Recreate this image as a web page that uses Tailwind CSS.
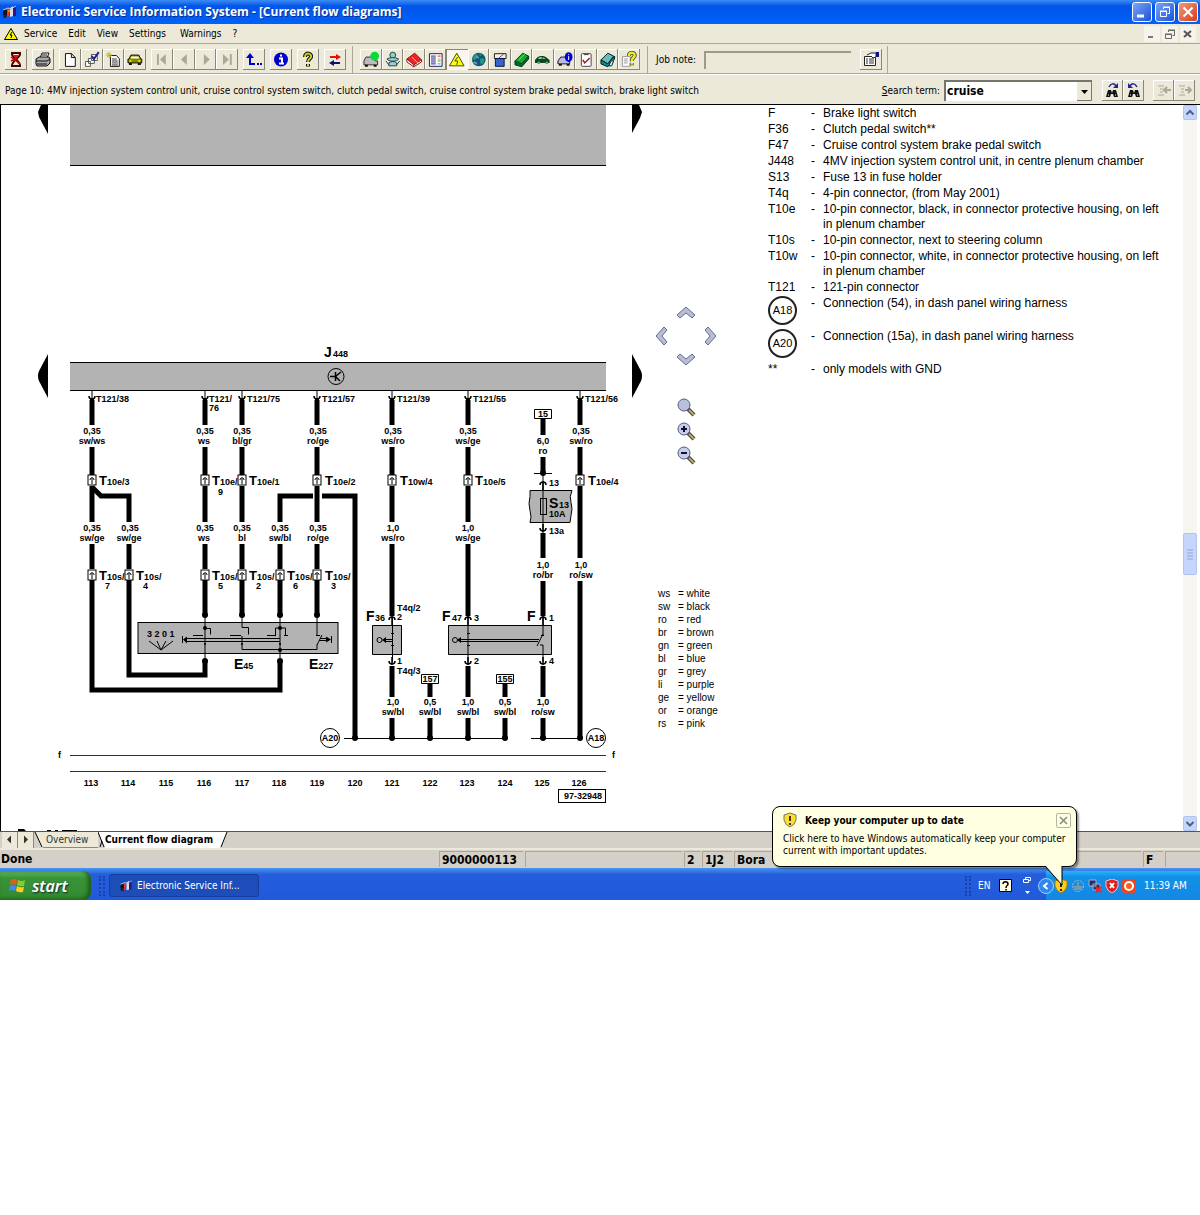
<!DOCTYPE html>
<html lang="en">
<head>
  <meta charset="UTF-8" />
  <meta name="viewport" content="width=device-width, initial-scale=1.0" />
  <title>Electronic Service Information System - [Current flow diagrams]</title>
  <script src="https://cdn.jsdelivr.net/npm/@tailwindcss/browser@4"></script>
</head>
<body class="bg-white text-black font-['DejaVu_Sans_Condensed','Noto_Sans',sans-serif] text-[10px]">

  <!-- title bar -->
  <header class="h-6 flex items-center gap-[3px] pl-0.5 pr-0.5 bg-linear-to-b from-[#3b8cf5] via-[#0254e6] via-25% to-[#0062fa]">
    <svg class="w-4 h-3.5" viewBox="0 0 16 14"><path d="M1 5h4v5H1z" fill="#111"/><circle cx="3" cy="11" r="2" fill="#222"/><path d="M5 4l2-2v9l-2 1z" fill="#e33"/><path d="M8 3l3-2v10l-3 1z" fill="#ddd"/><path d="M11 2h3v9h-3z" fill="#318"/><path d="M1 5l5-2 3 1 5-3" stroke="#9cf" fill="none"/><path d="M6 6h4" stroke="#fd3"/></svg>
    <h1 class="flex-1 font-['Open_Sans',sans-serif] font-bold text-white text-[12px] whitespace-nowrap [text-shadow:1px_1px_#0a2c8c]">Electronic Service Information System - [Current flow diagrams]</h1>
    <div class="flex gap-[3px] [&>button]:size-5 [&>button]:rounded-[3px] [&>button]:border [&>button]:border-white [&_svg]:size-full">
      <button aria-label="Minimize" class="bg-linear-to-br from-[#7ba4f4] to-[#1d4fd8]"><svg viewBox="0 0 18 18"><path d="M4 13h7" stroke="#fff" stroke-width="3"/></svg></button>
      <button aria-label="Restore" class="bg-linear-to-br from-[#7ba4f4] to-[#1d4fd8]"><svg viewBox="0 0 18 18" fill="none" stroke="#fff"><path d="M4.500 8.500h6v5h-6zM4 8h7M7.500 6v-1.500h6v6h-2M7 4h7"/></svg></button>
      <button aria-label="Close" class="bg-linear-to-br from-[#f0977c] to-[#d43a12]"><svg viewBox="0 0 18 18"><path d="M4.500 4.500l9 9M13.500 4.500l-9 9" stroke="#fff" stroke-width="2"/></svg></button>
    </div>
  </header>

  <!-- menu -->
  <nav class="h-[19px] flex items-center bg-[#ece9d8] pl-1 pr-1">
    <svg class="w-3.5 h-3 mr-[6px]" viewBox="0 0 14 12"><path d="M7 .5L13.500 11.500H.5z" fill="#ff0" stroke="#000"/><path d="M8 4l-2 3h2l-1 3" stroke="#000" fill="none"/></svg>
    <div class="flex-1 flex gap-[11px]">
      <a href="#">Service</a><a href="#">Edit</a><a href="#">View</a><a href="#">Settings</a><a href="#" class="ml-[3px]">Warnings</a><a href="#">?</a>
    </div>
    <div class="flex gap-[2px] [&>button]:size-4 [&>button]:bg-[#f5f3ea] [&_svg]:size-full" >
      <button aria-label="Minimize document"><svg viewBox="0 0 16 16"><path d="M4 11h5" stroke="#777" stroke-width="2"/></svg></button>
      <button aria-label="Restore document"><svg viewBox="0 0 16 16" fill="none" stroke="#666"><path d="M3.500 8.500h6v4h-6zM3 8h7M6.500 6V4.500h6v5h-2M6 4h7"/></svg></button>
      <button aria-label="Close document"><svg viewBox="0 0 16 16"><path d="M4 5l7 6M11 5l-7 6" stroke="#555" stroke-width="2"/></svg></button>
    </div>
  </nav>

  <!-- toolbar -->
  <div class="h-[31px] flex items-center bg-[#ece9d8] border-y border-t-[#aca899] border-b-[#aca899] pl-[5px] pt-[2px] [&_button]:h-[21px] [&_button]:w-[22px] [&_button]:shadow-[inset_-1px_-1px_#8a8778,inset_1px_1px_#fff] [&_button]:p-[2px] [&_svg]:size-full">
    <div class="flex gap-[5px]">
      <button aria-label="Exit"><svg viewBox="0 0 18 17"><path d="M4 2h10M4 15h10M5 3c0 4 8 6 8 12M13 3c0 4-8 6-8 12" stroke="#400" stroke-width="2" fill="none"/><path d="M6 4h6l-3 4z" fill="#e11"/><path d="M6 14l3-4 3 4z" fill="#ece9d8"/><path d="M4 6l9 7M4 10l6-3" stroke="#c00" stroke-width="1.500"/></svg></button>
      <button aria-label="Print"><svg viewBox="0 0 18 17" stroke="#111"><path d="M6 7l2-5h7l-2 5z" fill="#fff"/><path d="M2 8l3-2h10l1 2v4l-3 3H3l-1-2z" fill="#aaa"/><path d="M2 10h11l3-2M3 13h10M8 4h5" fill="none"/></svg></button>
      <div class="flex w-[87px] [&>button]:flex-1">
        <button aria-label="New"><svg viewBox="0 0 18 17"><path d="M4.500 2.500h6l4 4v9h-10zM10.500 2.500v4h4" fill="#fff" stroke="#111"/></svg></button>
        <button aria-label="Select jobs"><svg viewBox="0 0 18 17"><path d="M8.500 3.500h6v6h-6zM5.500 7.500h6v5h-6zM2.500 10.500h5v5h-5z" fill="#fff" stroke="#555"/><path d="M9 5l2 3 5-7" stroke="#228" stroke-width="2" fill="none"/></svg></button>
        <button aria-label="New document"><svg viewBox="0 0 18 17"><path d="M5.500 4.500h6l3 3v8h-9z" fill="#fff" stroke="#111"/><path d="M7 8h5M7 10h6M7 12h6M7 14h6" stroke="#333"/><path d="M1 4h6M4 1v6M2 2l4 4M6 2L2 6" stroke="#bb2"/></svg></button>
        <button aria-label="Vehicle"><svg viewBox="0 0 18 17"><path d="M5 4h8l2 4h1v4H2V8h1z" fill="#880" stroke="#111"/><path d="M5.500 5.500h7l1 2h-9z" fill="#ffd"/><circle cx="4.500" cy="10" r="1" fill="#ff0"/><circle cx="13.500" cy="10" r="1" fill="#ff0"/><path d="M3 13h3M12 13h3" stroke="#111" stroke-width="2"/></svg></button>
      </div>
      <div class="flex w-[87px] [&>button]:flex-1 text-[#aca899]">
        <button aria-label="First page"><svg viewBox="0 0 18 17"><path d="M5 3v11" stroke="currentColor" stroke-width="2"/><path d="M13 3v11L7 8.500z" fill="currentColor"/></svg></button>
        <button aria-label="Previous page"><svg viewBox="0 0 18 17"><path d="M12 3v11L6 8.500z" fill="currentColor"/></svg></button>
        <button aria-label="Next page"><svg viewBox="0 0 18 17"><path d="M7 3v11l6-5.500z" fill="currentColor"/></svg></button>
        <button aria-label="Last page"><svg viewBox="0 0 18 17"><path d="M13 3v11" stroke="currentColor" stroke-width="2"/><path d="M5 3v11l6-5.500z" fill="currentColor"/></svg></button>
      </div>
      <button aria-label="Back"><svg viewBox="0 0 18 17"><path d="M5 5v8h5" stroke="#00c" stroke-width="2" fill="none"/><path d="M1 7l4-5 4 5z" fill="#00c"/><path d="M12 12h2v2h-2zM15 12h2v2h-2z" fill="#00c"/></svg></button>
      <button aria-label="Information"><svg viewBox="0 0 18 17"><circle cx="9" cy="8.500" r="7" fill="#00c"/><path d="M7 7.500h3v5M7 12.500h5M8 4.500h2" stroke="#fff" stroke-width="2" fill="none"/></svg></button>
      <button aria-label="Help"><svg viewBox="0 0 18 17"><path d="M6 6c0-5 7-4 6 0-1 2-3 2-3 5M9 13v2.500" stroke="#111" stroke-width="4" fill="none"/><path d="M6 6c0-5 7-4 6 0-1 2-3 2-3 5M9 13v2" stroke="#cc2" stroke-width="2" fill="none"/></svg></button>
      <button aria-label="Swap"><svg viewBox="0 0 18 17"><path d="M4 5h6v-2l5 3-5 3V7H4z" fill="#d11"/><path d="M14 11H8V9l-5 3 5 3v-2h6z" fill="#116"/></svg></button>
    </div>
    <div class="w-px h-[28px] bg-[#aca899] ml-[6px] mr-[7px]"></div>
    <div class="flex w-[280px] [&>button]:flex-1">
      <button aria-label="Vehicle OK"><svg viewBox="0 0 18 17"><path d="M4 6h8l2 4h2v4H2v-4z" fill="#bbb" stroke="#333"/><path d="M3 15h3M12 15h3" stroke="#111" stroke-width="2"/><circle cx="13" cy="5" r="4.500" fill="#0d3"/></svg></button>
      <button aria-label="Technician"><svg viewBox="0 0 18 17" fill="#9cc" stroke="#244"><circle cx="9" cy="4" r="3"/><path d="M3 8c4-2 8-2 12 0-2 3-10 3-12 0zM5 12c2-2 6-2 8 0v3H5zM2 10l3 4M16 10l-3 4"/></svg></button>
      <button aria-label="Manuals"><svg viewBox="0 0 18 17"><path d="M2 8l8-6 7 7-8 5z" fill="#e22" stroke="#811"/><path d="M2 8v3l7 5v-2zM9 16l8-5V9" fill="#fff" stroke="#811"/><path d="M7 6l6 6" stroke="#fbb"/></svg></button>
      <button aria-label="Contents"><svg viewBox="0 0 18 17"><path d="M2.500 2.500h13v13h-13z" fill="#fff" stroke="#225"/><path d="M4 5h5M4 7h5M4 9h5M4 11h5M4 13h5" stroke="#228"/><path d="M11 5h3" stroke="#d22"/><path d="M11 8h3" stroke="#da2"/><path d="M11 10h3" stroke="#2a2"/><path d="M11 13h3" stroke="#29d"/></svg></button>
      <button aria-label="Current flow diagrams" aria-pressed="true" class="bg-[#f8f6ee] shadow-[inset_1px_1px_#8a8778]!"><svg viewBox="0 0 18 17"><path d="M9 2l7.500 13H1.500z" fill="#ff0" stroke="#442"/><path d="M10 6l-3 4h3l-1 4" stroke="#443" fill="none"/></svg></button>
      <button aria-label="World"><svg viewBox="0 0 18 17"><circle cx="9" cy="8.500" r="7" fill="#157" /><path d="M4 4c4-2 5 0 3 3s-4 2-5 1zM10 8c4-2 6 0 4 4l-3 2zM9 2l4 2-3 1z" fill="#297"/><path d="M4 11l3 2M6 5l3 2" stroke="#69c" stroke-width="2"/></svg></button>
      <button aria-label="Screen"><svg viewBox="0 0 18 17"><path d="M3.500 2.500h12v5h-12z" fill="#eee" stroke="#222"/><path d="M4.500 7.500h9v8h-9z" fill="#36c" stroke="#113"/><path d="M8 7l5-4" stroke="#555"/></svg></button>
      <button aria-label="Green book"><svg viewBox="0 0 18 17"><path d="M2 10l8-8 6 3-7 8z" fill="#1a3" stroke="#041"/><path d="M2 10v4l7 2 7-8V5l-7 8z" fill="#063" stroke="#041"/><path d="M6 9l6-6" stroke="#6e6"/></svg></button>
      <button aria-label="Body work"><svg viewBox="0 0 18 17"><path d="M1 9c2-2 3-4 7-4s5 2 8 4v3H1z" fill="#142"/><path d="M4 8l2-2h2v2zM9 6l3 2H9z" fill="#8c9"/><circle cx="5" cy="12" r="1.500" fill="#5a7"/><circle cx="13" cy="12" r="1.500" fill="#5a7"/></svg></button>
      <button aria-label="Vehicle information"><svg viewBox="0 0 18 17"><path d="M2 10l3-4h6l3 4v3H2z" fill="#bbd" stroke="#114"/><path d="M3 14h3M11 14h3" stroke="#111" stroke-width="2"/><ellipse cx="13" cy="6" rx="4" ry="5" fill="#00d"/><path d="M13 3v1M13 5v4" stroke="#fff"/></svg></button>
      <button aria-label="Check list"><svg viewBox="0 0 18 17"><rect x="4.500" y="2.500" width="10" height="13" rx="1" fill="#fff" stroke="#444"/><path d="M7 2h5v2H7z" fill="#555"/><path d="M6 9l2 3 5-5" stroke="#822" stroke-width="1.500" fill="none"/></svg></button>
      <button aria-label="Service book"><svg viewBox="0 0 18 17"><path d="M2 9l7-7 6 3-6 8z" fill="#6bb" stroke="#022"/><path d="M2 9v4l7 3 7-8V5l-7 8z" fill="#188" stroke="#022"/><path d="M12 11l-2 4h3l2-5" fill="#cff" stroke="#022"/></svg></button>
      <button aria-label="Document help"><svg viewBox="0 0 18 17"><path d="M2.500 5.500h8v10h-8z" fill="#fff" stroke="#999"/><path d="M4 8h4M4 10h4M4 12h4" stroke="#999"/><path d="M9 5c0-5 7-4 6 0-1 2-3 2-3 5M12 12v2.500" stroke="#333" stroke-width="4" fill="none"/><path d="M9 5c0-5 7-4 6 0-1 2-3 2-3 5M12 12v2" stroke="#ee1" stroke-width="2.500" fill="none"/></svg></button>
    </div>
    <div class="w-px h-[28px] bg-[#aca899] ml-[7px] mr-[8px]"></div>
    <label for="job" class="w-[48px] whitespace-nowrap">Job note:</label>
    <input id="job" type="text" class="w-[147px] h-[18px] border-t-2 border-l-2 border-[#9d9a8b] bg-[#ece9d8]" />
    <button aria-label="Job properties" class="ml-[9px]"><svg viewBox="0 0 18 17"><path d="M2.500 5.500h11v9h-11z" fill="#fff" stroke="#222"/><path d="M4 8h2M7 8h5M4 10h2M7 10h5M4 12h2M7 12h5" stroke="#333"/><path d="M5 4l4-2h5v4l-3 1-2-2" fill="#fff" stroke="#222"/><path d="M14 1h3v5h-3z" fill="#118"/></svg></button>
    <div class="w-px h-[28px] bg-[#aca899] ml-[5px]"></div>
  </div>

  <!-- page heading and search -->
  <div class="h-[30px] flex items-center bg-[#ece9d8] border-t border-t-white pl-[5px] pr-[5px] pt-px whitespace-nowrap">
    <p class="flex-1">Page 10: 4MV injection system control unit, cruise control system switch, clutch pedal switch, cruise control system brake pedal switch, brake light switch</p>
    <label for="term" class="mr-1"><u>S</u>earch term:</label>
    <div class="relative w-[148px] h-[21px]">
      <select id="term" class="size-full appearance-none bg-white border-t-2 border-l-2 border-[#77756a] pl-px font-bold text-[12px]"><option>cruise</option></select>
      <svg class="absolute right-0 top-[2px] w-[15px] h-[19px] bg-[#ece9d8] pointer-events-none" viewBox="0 0 15 19"><path d="M4 8h7l-3.500 4z"/><path d="M14.500 0v18.500H0" fill="none" stroke="#777"/></svg>
    </div>
    <div class="flex ml-[10px] [&>button]:w-[21px] [&>button]:h-[21px] [&>button]:shadow-[inset_-1px_-1px_#8a8778,inset_1px_1px_#fff] [&>button]:p-[2px] [&_svg]:size-full">
      <button aria-label="Find next"><svg viewBox="0 0 17 17"><path d="M2 15l2-7h3l1 3 1-3h3l2 7h-4l-1-3H7l-1 3z" fill="#111"/><path d="M4 13h1M11 13h1" stroke="#fff"/><path d="M5 5c2-4 5-4 7-1" stroke="#229" stroke-width="1.500" fill="none"/><path d="M14 1v5H9z" fill="#229"/></svg></button>
      <button aria-label="Find previous"><svg viewBox="0 0 17 17"><path d="M3 15l2-7h3l1 3 1-3h3l2 7h-4l-1-3H8l-1 3z" fill="#111"/><path d="M5 13h1M12 13h1" stroke="#fff"/><path d="M12 5c-2-4-5-4-7-1" stroke="#229" stroke-width="1.500" fill="none"/><path d="M3 1v5h5z" fill="#229"/></svg></button>
      <button aria-label="Previous hit" disabled class="ml-[9px]"><svg viewBox="0 0 17 17" stroke="#aca899"><path d="M3 4h6M5 7h3M5 10h3M3 13h6"/><path d="M16 8H10M12 5l-3 3 3 3" stroke-width="2" fill="none"/></svg></button>
      <button aria-label="Next hit" disabled><svg viewBox="0 0 17 17" stroke="#aca899"><path d="M3 4h6M5 7h3M5 10h3M3 13h6"/><path d="M9 8h6M12 5l3 3-3 3" stroke-width="2" fill="none"/></svg></button>
    </div>
  </div>

  <!-- document -->
  <main class="flex border-t border-l border-black bg-white">
    <svg class="shrink-0 w-[649px] h-[726px]" viewBox="1 105 649 726" font-family="Liberation Sans, Arial, sans-serif" font-weight="bold" font-size="9">
      <defs>
        <g id="down"><path d="M0 391v8" stroke="#000"/><path d="M-3 396c0 4 6 4 6 0M-2 400h4" fill="none" stroke="#000" stroke-width="1.500"/></g>
        <g id="up"><path d="M-3 4c0-4 6-4 6 0M0 0v9" fill="none" stroke="#000" stroke-width="1.500"/></g>
        <g id="cup"><path d="M-3 -4c0 4 6 4 6 0M0 -8v8" fill="none" stroke="#000" stroke-width="1.500"/></g>
        <g id="plug"><rect x="-4" y="-5" width="8" height="10" fill="#fff" stroke="#000"/><path d="M-2 0c0-3 4-3 4 0M0-2v6" fill="none" stroke="#000"/></g>
      </defs>

      <!-- control unit bars -->
      <path d="M70 105h536v60H70zM70 362h536v29H70z" fill="#b3b3b3"/>
      <path d="M70 165.500h536M70 362.500h536M70 390.500h536" stroke="#000"/>
      <path d="M48 105v29l-9-17-1-5 3-7zM632 105v28l8-15 2-6-3-7zM48 354v44l-9-17q-2-5 0-10zM632 354v44l9-17q2-5 0-10z"/>
      <text x="324" y="357" font-size="14">J</text><text x="333" y="357">448</text>
      <circle cx="336" cy="376.500" r="8" fill="none" stroke="#000"/>
      <path d="M330 376.500h6M335.500 372v9M336 376l5-4M336 377l4 4" stroke="#000" stroke-width="1.500"/>

      <!-- wires -->
      <g fill="none" stroke="#000" stroke-width="5">
        <path d="M92 400v25M205 400v25M242 400v25M317 400v25M392 400v25M468 400v25M580 400v25"/>
        <path d="M92 447v28M205 447v28M242 447v28M317 447v28M392 447v28M468 447v28M580 447v28"/>
        <path d="M92 486v36M205 486v36M242 486v36M317 486v36M392 486v36M468 486v36M580 486v72"/>
        <path d="M92 487l9 9h28v26M280 522v-26h33M322 496h33v242"/>
        <path d="M92 544v25M129 544v25M205 544v25M242 544v25M280 544v25M317 544v25M392 544v72M468 544v72"/>
        <path d="M205 580v35M242 580v35M280 580v35M317 580v35"/>
        <path d="M129 580v95h76v-14M92 580v110h188v-29"/>
        <path d="M543 419v16M543 457v16M543 533v25M543 581v35M580 581v157"/>
        <path d="M392 666v31M468 666v31M543 666v31M430 684v13M505 684v13"/>
        <path d="M392 718v20M430 718v20M468 718v20M505 718v20M543 718v20"/>
      </g>
      <use href="#down" x="92"/><use href="#down" x="205"/><use href="#down" x="242"/><use href="#down" x="317"/><use href="#down" x="392"/><use href="#down" x="468"/><use href="#down" x="580"/>
      <use href="#plug" x="92" y="480"/><use href="#plug" x="205" y="480"/><use href="#plug" x="242" y="480"/><use href="#plug" x="317" y="480"/><use href="#plug" x="392" y="480"/><use href="#plug" x="468" y="480"/><use href="#plug" x="580" y="480"/>
      <use href="#plug" x="92" y="575"/><use href="#plug" x="129" y="575"/><use href="#plug" x="205" y="575"/><use href="#plug" x="242" y="575"/><use href="#plug" x="280" y="575"/><use href="#plug" x="317" y="575"/>

      <!-- pin names -->
      <text x="96" y="402">T121/38</text><text x="209" y="402">T121/</text><text x="209" y="411">76</text><text x="247" y="402">T121/75</text><text x="322" y="402">T121/57</text><text x="397" y="402">T121/39</text><text x="473" y="402">T121/55</text><text x="585" y="402">T121/56</text>
      <text x="99" y="485"><tspan font-size="13">T</tspan>10e/3</text>
      <text x="212" y="485"><tspan font-size="13">T</tspan>10e/</text><text x="218" y="495">9</text>
      <text x="249" y="485"><tspan font-size="13">T</tspan>10e/1</text>
      <text x="325" y="485"><tspan font-size="13">T</tspan>10e/2</text>
      <text x="400" y="485"><tspan font-size="13">T</tspan>10w/4</text>
      <text x="475" y="485"><tspan font-size="13">T</tspan>10e/5</text>
      <text x="588" y="485"><tspan font-size="13">T</tspan>10e/4</text>
      <text x="99" y="580"><tspan font-size="13">T</tspan>10s/</text><text x="105" y="589">7</text>
      <text x="136" y="580"><tspan font-size="13">T</tspan>10s/</text><text x="143" y="589">4</text>
      <text x="212" y="580"><tspan font-size="13">T</tspan>10s/</text><text x="218" y="589">5</text>
      <text x="249" y="580"><tspan font-size="13">T</tspan>10s/</text><text x="256" y="589">2</text>
      <text x="287" y="580"><tspan font-size="13">T</tspan>10s/</text><text x="293" y="589">6</text>
      <text x="325" y="580"><tspan font-size="13">T</tspan>10s/</text><text x="331" y="589">3</text>

      <!-- cross sections and colours -->
      <g text-anchor="middle">
        <text x="92" y="434">0,35</text><text x="92" y="444">sw/ws</text>
        <text x="205" y="434">0,35</text><text x="204" y="444">ws</text>
        <text x="242" y="434">0,35</text><text x="242" y="444">bl/gr</text>
        <text x="318" y="434">0,35</text><text x="318" y="444">ro/ge</text>
        <text x="393" y="434">0,35</text><text x="393" y="444">ws/ro</text>
        <text x="468" y="434">0,35</text><text x="468" y="444">ws/ge</text>
        <text x="581" y="434">0,35</text><text x="581" y="444">sw/ro</text>
        <text x="543" y="444">6,0</text><text x="543" y="454">ro</text>
        <text x="92" y="531">0,35</text><text x="92" y="541">sw/ge</text>
        <text x="130" y="531">0,35</text><text x="129" y="541">sw/ge</text>
        <text x="205" y="531">0,35</text><text x="204" y="541">ws</text>
        <text x="242" y="531">0,35</text><text x="242" y="541">bl</text>
        <text x="280" y="531">0,35</text><text x="280" y="541">sw/bl</text>
        <text x="318" y="531">0,35</text><text x="318" y="541">ro/ge</text>
        <text x="393" y="531">1,0</text><text x="393" y="541">ws/ro</text>
        <text x="468" y="531">1,0</text><text x="468" y="541">ws/ge</text>
        <text x="543" y="568">1,0</text><text x="543" y="578">ro/br</text>
        <text x="581" y="568">1,0</text><text x="581" y="578">ro/sw</text>
        <text x="393" y="705">1,0</text><text x="393" y="715">sw/bl</text>
        <text x="430" y="705">0,5</text><text x="430" y="715">sw/bl</text>
        <text x="468" y="705">1,0</text><text x="468" y="715">sw/bl</text>
        <text x="505" y="705">0,5</text><text x="505" y="715">sw/bl</text>
        <text x="543" y="705">1,0</text><text x="543" y="715">ro/sw</text>
      </g>

      <!-- fuse S13 -->
      <path d="M534.500 409.500h17v9h-17zM421.500 674.500h17v9h-17zM496.500 674.500h17v9h-17z" fill="#fff" stroke="#000"/>
      <g text-anchor="middle"><text x="543" y="417">15</text><text x="430" y="682">157</text><text x="505" y="682">155</text></g>
      <path d="M530 490.500h42q-3 6-1 12t0 13l-1 7h-40q2-5 0-12t0-14z" fill="#b3b3b3" stroke="#000"/>
      <path d="M534 473.500h18M543 473v60" stroke="#000"/><circle cx="543" cy="473" r="3"/>
      <use href="#up" x="543" y="481"/><use href="#cup" x="543" y="532"/>
      <rect x="540.500" y="498.500" width="6" height="16" fill="none" stroke="#000"/>
      <text x="549" y="486">13</text><text x="549" y="508" font-size="14">S</text><text x="559" y="508">13</text><text x="549" y="517">10A</text><text x="549" y="534">13a</text>

      <!-- E45 / E227 -->
      <rect x="138" y="622.500" width="200" height="31" fill="#b3b3b3" stroke="#000"/>
      <text x="147" y="637">3 2 0 1</text>
      <g fill="none" stroke="#000">
        <path d="M149 641l12 9 12-9M157 641l4 9 5-9"/>
        <path d="M187 638.500h93M187 641.500h93" />
        <path d="M205 615v46M205 628.500h5.500v6M193 635.500h10" />
        <path d="M242 615v12.500h6.500v7M242 636v13.500h75v-5M230 635.500h11" />
        <path d="M280 615v46M275.500 635v-7h10v7M267 635.500h9M284 635.500h4" />
        <path d="M317 615v20M316 635.500h4M317 645l5-10M320 638.500h8M319 640.500h8M331.500 636v7M182.500 636v7"/>
      </g>
      <path d="M183 639.500l4-3v7zM331 639.500l-5-3v6z"/>
      <g><circle cx="205" cy="615" r="3"/><circle cx="242" cy="615" r="3"/><circle cx="280" cy="615" r="3"/><circle cx="317" cy="615" r="3"/><circle cx="205" cy="661" r="3"/><circle cx="280" cy="661" r="3"/><circle cx="205" cy="628" r="2"/><circle cx="280" cy="628" r="2"/><circle cx="280" cy="650" r="2"/><circle cx="205" cy="644" r="1"/><circle cx="242" cy="644" r="1"/><circle cx="280" cy="644" r="1"/></g>
      <text x="234" y="669"><tspan font-size="14">E</tspan>45</text><text x="309" y="669"><tspan font-size="14">E</tspan>227</text>

      <!-- F36, F47, F -->
      <path d="M372.500 625.500h29v29h-29zM448.500 625.500h103v29h-103z" fill="#b3b3b3" stroke="#000"/>
      <path d="M392.500 618v44M468 618v44M543 618v17M541 635.500h3M543 662v-17h-3M537 646l6-12" stroke="#000" fill="none"/>
      <path d="M385 639.500h7M385 641.500h7M460 639.500h79M460 641.500h78M391 633.500h3M391 645.500h3M467 633.500h3M467 645.500h3" stroke="#000"/>
      <path d="M382 640l4-3v6zM457 640l4-3v6z"/>
      <circle cx="379.500" cy="640" r="2.500" fill="none" stroke="#000"/><circle cx="455" cy="640" r="2.500" fill="none" stroke="#000"/>
      <use href="#up" x="392" y="616"/><use href="#up" x="468" y="616"/><use href="#up" x="543" y="616"/>
      <use href="#cup" x="392" y="665"/><use href="#cup" x="468" y="665"/><use href="#cup" x="543" y="665"/>
      <text x="366" y="621" font-size="14">F</text><text x="375" y="621">36</text><text x="442" y="621" font-size="14">F</text><text x="452" y="621">47</text><text x="527" y="621" font-size="14">F</text>
      <text x="397" y="611">T4q/2</text><text x="397" y="620">2</text><text x="397" y="664">1</text><text x="397" y="674">T4q/3</text>
      <text x="474" y="621">3</text><text x="474" y="664">2</text><text x="549" y="621">1</text><text x="549" y="664">4</text>

      <!-- connections -->
      <path d="M344 738.500h161M531 738.500h49" stroke="#000"/>
      <circle cx="355" cy="738" r="3"/><circle cx="392" cy="738" r="3"/><circle cx="430" cy="738" r="3"/><circle cx="468" cy="738" r="3"/><circle cx="505" cy="738" r="3"/><circle cx="543" cy="738" r="3"/><circle cx="580" cy="738" r="3"/>
      <g fill="none" stroke="#000"><circle cx="330" cy="738" r="9.500"/><circle cx="596" cy="738" r="9.500"/></g>
      <g text-anchor="middle"><text x="330" y="741">A20</text><text x="596" y="741">A18</text></g>

      <!-- current tracks -->
      <path d="M70 755.500h536M70 771.500h536" stroke="#333"/>
      <text x="58" y="758">f</text><text x="612" y="758">f</text>
      <g text-anchor="middle">
        <text x="91" y="786">113</text><text x="128" y="786">114</text><text x="166" y="786">115</text><text x="204" y="786">116</text><text x="242" y="786">117</text><text x="279" y="786">118</text><text x="317" y="786">119</text><text x="355" y="786">120</text><text x="392" y="786">121</text><text x="430" y="786">122</text><text x="467" y="786">123</text><text x="505" y="786">124</text><text x="542" y="786">125</text><text x="579" y="786">126</text>
        <text x="583" y="799">97-32948</text>
      </g>
      <rect x="558.500" y="789.500" width="47" height="13" fill="none" stroke="#000"/>
      <path d="M18 829h6l2 2h-8zM47 830h4v1h-4zM55 830h3v1h-3zM62 830h15v1H62z"/>
    </svg>

    <aside class="shrink-0 w-[110px] pt-[195px] font-['Liberation_Sans',Arial,sans-serif]">
      <div class="grid grid-cols-3 grid-rows-3 w-[72px] h-[72px] [&_svg]:size-5 place-items-center [&_path]:fill-[#b9bcd6] [&_path]:stroke-[#6a6d88]">
        <button aria-label="Up" class="col-start-2"><svg viewBox="0 0 20 20"><path d="M1 13l9-8 9 8-3 3-6-5-6 5z"/></svg></button>
        <button aria-label="Left" class="col-start-1"><svg viewBox="0 0 20 20"><path d="M12 1l-8 9 8 9 3-3-5-6 5-6z"/></svg></button>
        <button aria-label="Right" class="col-start-3"><svg viewBox="0 0 20 20"><path d="M8 1l8 9-8 9-3-3 5-6-5-6z"/></svg></button>
        <button aria-label="Down" class="col-start-2"><svg viewBox="0 0 20 20"><path d="M1 7l9 8 9-8-3-3-6 5-6-5z"/></svg></button>
      </div>
      <div class="flex flex-col w-[72px] items-center gap-1 mt-[25px] [&>button]:h-5 [&_svg]:size-5">
        <button aria-label="Zoom original"><svg viewBox="0 0 20 20"><path d="M12 12l6 6" stroke="#444" stroke-width="4"/><path d="M13 13l5 5" stroke="#bba96a" stroke-width="2"/><circle cx="8" cy="8" r="6" fill="#b9c0dd" stroke="#555a80"/></svg></button>
        <button aria-label="Zoom in"><svg viewBox="0 0 20 20"><path d="M12 12l6 6" stroke="#444" stroke-width="4"/><path d="M13 13l5 5" stroke="#bba96a" stroke-width="2"/><circle cx="8" cy="8" r="6" fill="#c8cdea" stroke="#555a80"/><path d="M5 8h6M8 5v6" stroke="#113" stroke-width="2"/></svg></button>
        <button aria-label="Zoom out"><svg viewBox="0 0 20 20"><path d="M12 12l6 6" stroke="#444" stroke-width="4"/><path d="M13 13l5 5" stroke="#bba96a" stroke-width="2"/><circle cx="8" cy="8" r="6" fill="#c8cdea" stroke="#555a80"/><path d="M5 8h6" stroke="#113" stroke-width="2"/></svg></button>
      </div>
      <table class="mt-[122px] ml-2 text-[10px] leading-[13px] [&_td]:p-0 [&_td:first-child]:w-[20px]">
        <tbody>
          <tr><td>ws</td><td>= white</td></tr>
          <tr><td>sw</td><td>= black</td></tr>
          <tr><td>ro</td><td>= red</td></tr>
          <tr><td>br</td><td>= brown</td></tr>
          <tr><td>gn</td><td>= green</td></tr>
          <tr><td>bl</td><td>= blue</td></tr>
          <tr><td>gr</td><td>= grey</td></tr>
          <tr><td>li</td><td>= purple</td></tr>
          <tr><td>ge</td><td>= yellow</td></tr>
          <tr><td>or</td><td>= orange</td></tr>
          <tr><td>rs</td><td>= pink</td></tr>
        </tbody>
      </table>
    </aside>

    <section class="flex-1 pl-2 pt-px">
      <table class="font-['Liberation_Sans',Arial,sans-serif] text-[12px] leading-[15px] w-full max-w-[405px] [&_td]:p-0 [&_td]:pb-px [&_td]:align-top">
        <tbody>
          <tr><td class="w-[43px]">F</td><td class="w-3">-</td><td>Brake light switch</td></tr>
          <tr><td>F36</td><td>-</td><td>Clutch pedal switch**</td></tr>
          <tr><td>F47</td><td>-</td><td>Cruise control system brake pedal switch</td></tr>
          <tr><td>J448</td><td>-</td><td>4MV injection system control unit, in centre plenum chamber</td></tr>
          <tr><td>S13</td><td>-</td><td>Fuse 13 in fuse holder</td></tr>
          <tr><td>T4q</td><td>-</td><td>4-pin connector, (from May 2001)</td></tr>
          <tr><td>T10e</td><td>-</td><td>10-pin connector, black, in connector protective housing, on left<br>in plenum chamber</td></tr>
          <tr><td>T10s</td><td>-</td><td>10-pin connector, next to steering column</td></tr>
          <tr><td>T10w</td><td>-</td><td>10-pin connector, white, in connector protective housing, on left<br>in plenum chamber</td></tr>
          <tr><td>T121</td><td>-</td><td>121-pin connector</td></tr>
          <tr><td class="h-[33px]"><div class="size-[29px] rounded-full border-2 border-[#222] flex items-center justify-center text-[11px]">A18</div></td><td>-</td><td>Connection (54), in dash panel wiring harness</td></tr>
          <tr><td class="h-[33px]"><div class="size-[29px] rounded-full border-2 border-[#222] flex items-center justify-center text-[11px]">A20</div></td><td>-</td><td>Connection (15a), in dash panel wiring harness</td></tr>
          <tr><td>**</td><td>-</td><td>only models with GND</td></tr>
        </tbody>
      </table>
    </section>

    <div class="w-[14px] mr-[3px] flex flex-col bg-[#f6f5f0] [&>button]:w-full [&>button]:rounded-[2px] [&>button]:bg-[#c6d5fb] [&>button]:border [&>button]:border-[#b0c4f0] [&_svg]:size-full">
      <button aria-label="Scroll up" class="h-[15px]"><svg viewBox="0 0 12 12"><path d="M2.500 8L6 4.500 9.500 8" stroke="#4d6185" stroke-width="2" fill="none"/></svg></button>
      <div class="grow-103"></div>
      <button aria-label="Scroll position" class="h-[42px]"><svg viewBox="0 0 12 40"><path d="M3 16h6M3 19h6M3 22h6M3 25h6" stroke="#8ea6e0"/></svg></button>
      <div class="grow-60"></div>
      <button aria-label="Scroll down" class="h-[15px]"><svg viewBox="0 0 12 12"><path d="M2.500 4.500L6 8l3.500-3.500" stroke="#4d6185" stroke-width="2" fill="none"/></svg></button>
    </div>
  </main>

  <footer class="relative">
    <!-- sheet tabs -->
    <div class="h-[17px] flex bg-[#d4d0c8] border-t border-[#555] whitespace-nowrap">
      <div class="flex pl-0.5 [&>button]:w-4 [&>button]:h-4 [&>button]:border-r [&>button]:border-[#888] [&>button]:bg-[#ece9d8] [&_svg]:size-full">
        <button aria-label="Previous tab"><svg viewBox="0 0 15 15"><path d="M9 3v8L5 7z" fill="#333"/></svg></button>
        <button aria-label="Next tab"><svg viewBox="0 0 15 15"><path d="M6 3v8l4-4z" fill="#333"/></svg></button>
      </div>
      <svg class="w-[9px] h-4" viewBox="0 0 9 16"><path d="M1 0l7 15H9V0z" fill="#ece9d8"/><path d="M1 0l7 15" stroke="#000"/></svg>
      <a href="#" class="w-[55px] pl-[3px] bg-[#ece9d8] text-[#333] leading-4 border-b border-[#888]">Overview</a>
      <svg class="w-[7px] h-4" viewBox="0 0 7 16"><path d="M0 0h7v15z" fill="#fff"/><path d="M0 0l6 15M2 15l2-6" stroke="#000"/></svg>
      <a href="#" aria-current="page" class="w-[115px] bg-white font-bold leading-4">Current flow diagram</a>
      <svg class="w-[8px] h-4" viewBox="0 0 8 16"><path d="M0 0h7L1 15H0z" fill="#fff"/><path d="M7 0L1 15" stroke="#000"/></svg>
    </div>
    <!-- status bar -->
    <div class="h-5 flex items-center gap-0.5 bg-[#d4d0c8] border-t-2 border-[#ece9d8] font-bold text-[12px] pt-0.5 pb-0.5 [&>div]:h-4 [&>div]:leading-4 [&>div]:pl-[2px] [&>div]:border-l [&>div]:border-t [&>div]:border-[#aca899]">
      <p class="w-[437px] pl-px">Done</p>
      <div class="w-[84px]">9000000113</div><div class="w-[157px]"></div><div class="w-[16px]">2</div><div class="w-[30px]">1J2</div><div class="flex-1">Bora</div><div class="w-[20px]">F</div><div class="w-[35px]"></div>
    </div>
    <!-- taskbar -->
    <div class="h-8 pt-[3px] flex items-center bg-linear-to-b from-[#4a94f0] via-[#245edb] via-20% to-[#2159dc] text-white whitespace-nowrap">
      <button class="w-[91px] h-full flex items-center gap-[5px] pl-[9px] rounded-r-lg bg-linear-to-b from-[#5eb65c] via-[#3a9338] via-25% to-[#328a30] shadow-[inset_-3px_-1px_4px_#1c5c1a] font-['Noto_Sans',sans-serif] font-semibold italic text-[16px] [text-shadow:1px_1px_2px_#123]">
        <svg class="w-[18px] h-4" viewBox="0 0 18 16"><path d="M2 2q4-2 6 0L7 7Q4 5 1 7z" fill="#ee5522"/><path d="M9 2q4 2 7 0l-1 6q-4 1-7-1z" fill="#8c3"/><path d="M1 8q3-2 6 0l-1 5q-3-2-6 0z" fill="#48e"/><path d="M8 8q3 2 7 1l-1 5q-4 1-7-1z" fill="#fc2"/></svg>
        start
      </button>
      <div class="w-[6px] h-5 ml-[8px] border-x-2 border-dotted border-[#1740a8]"></div>
      <button class="ml-[4px] w-[150px] h-[23px] rounded-[3px] flex items-center gap-[3px] pl-[9px] bg-[#1c4db8] border border-[#163d98]">
        <svg class="w-[15px] h-3" viewBox="0 0 16 14"><path d="M1 5h4v5H1z" fill="#111"/><circle cx="3" cy="11" r="2" fill="#222"/><path d="M5 4l2-2v9l-2 1z" fill="#e33"/><path d="M8 3l3-2v10l-3 1z" fill="#ddd"/><path d="M11 2h3v9h-3z" fill="#318"/><path d="M1 5l5-2 3 1 5-3" stroke="#9cf" fill="none"/></svg>
        Electronic Service Inf...
      </button>
      <div class="flex-1"></div>
      <div class="w-[6px] h-5 border-x-2 border-dotted border-[#1740a8] mr-[7px]"></div>
      <span class="w-[21px]">EN</span>
      <svg class="size-[13px]" viewBox="0 0 13 13"><path d="M.5.5h12v12H.5z" fill="#ffffe1" stroke="#000"/><path d="M4 5c0-3 5-3 5 0 0 2-2 1-2 4M7 10v1.500" stroke="#000" stroke-width="1.500" fill="none"/></svg>
      <svg class="w-[8px] h-5 ml-[11px] mr-[15px]" viewBox="0 0 8 20"><path d="M2.500 3.500V1.500h5v3h-2M.5 3.500h5v3H.5z" stroke="#fff" fill="none"/><path d="M2 15h5l-2.500 3z" fill="#fff"/></svg>
      <div class="relative h-full w-[154px] bg-linear-to-b from-[#28b4f8] via-[#1290e8] via-20% to-[#1288e4] flex items-center gap-[3px] pl-[8px] [&>svg]:w-[14px] [&>svg]:h-[14px]">
        <button aria-label="Show hidden icons" class="absolute -left-2 size-4 rounded-full bg-[#2f86ee] border border-[#9cd0ff]"><svg viewBox="0 0 14 14"><path d="M8.500 4L5 7l3.500 3" stroke="#fff" stroke-width="2" fill="none"/></svg></button>
        <svg viewBox="0 0 14 14"><path d="M7 0l6 2v5q-1 5-6 7-5-2-6-7V2z" fill="#fc2" stroke="#a70"/><path d="M7 3v5M7 10v2" stroke="#222" stroke-width="2"/></svg>
        <svg viewBox="0 0 14 14"><circle cx="7" cy="7" r="5.500" fill="none" stroke="#9bd" stroke-dasharray="2 1"/><path d="M2 7h10l-2 4H4zM6 3h2v4H6z" fill="#79a"/></svg>
        <svg viewBox="0 0 14 14"><path d="M1 1h7v6H1zM5 5h7v6H5z" fill="#236" stroke="#aac"/><path d="M8 8l5 5M13 8l-5 5" stroke="#e22" stroke-width="2"/></svg>
        <svg viewBox="0 0 14 14"><path d="M7 0l6 2v5q-1 5-6 7-5-2-6-7V2z" fill="#d22" stroke="#fbb"/><path d="M5 4l4 5M9 4L5 9" stroke="#fff" stroke-width="2"/></svg>
        <svg viewBox="0 0 14 14"><rect width="14" height="14" rx="3" fill="#e42"/><circle cx="7" cy="7" r="5" fill="#fff"/><circle cx="7" cy="7" r="3" fill="#e62"/></svg>
        <span class="ml-[5px]">11:39 AM</span>
      </div>
    </div>

    <!-- update balloon -->
    <div class="absolute right-[123px] bottom-[33px] w-[305px] h-[61px] rounded-lg border border-black bg-[#ffffe1] pl-[10px] pr-[5px] pt-[5px] shadow-[2px_2px_2px_#0006]">
      <div class="flex items-center">
        <svg class="w-[14px] h-4 mr-2" viewBox="0 0 14 16"><path d="M7 1l6 2v5q-1 5-6 7-5-2-6-7V3z" fill="#fd2" stroke="#777"/><path d="M7 4v5M7 11v2" stroke="#432" stroke-width="2"/></svg>
        <h2 class="flex-1 font-bold">Keep your computer up to date</h2>
        <button aria-label="Close" class="size-[15px] border border-[#b5b5a0] rounded-[2px]"><svg viewBox="0 0 13 13"><path d="M3 3l7 7M10 3l-7 7" stroke="#888" stroke-width="1.500"/></svg></button>
      </div>
      <p class="leading-[12px] mt-[5px] whitespace-nowrap">Click here to have Windows automatically keep your computer<br>current with important updates.</p>
      <svg class="absolute right-[12px] top-[58px] w-[20px] h-[23px]" viewBox="0 0 20 23"><path d="M1 0l17 20V0z" fill="#ffffe1"/><path d="M1 1l17 19V1" fill="none" stroke="#000"/></svg>
    </div>
  </footer>

</body>
</html>
